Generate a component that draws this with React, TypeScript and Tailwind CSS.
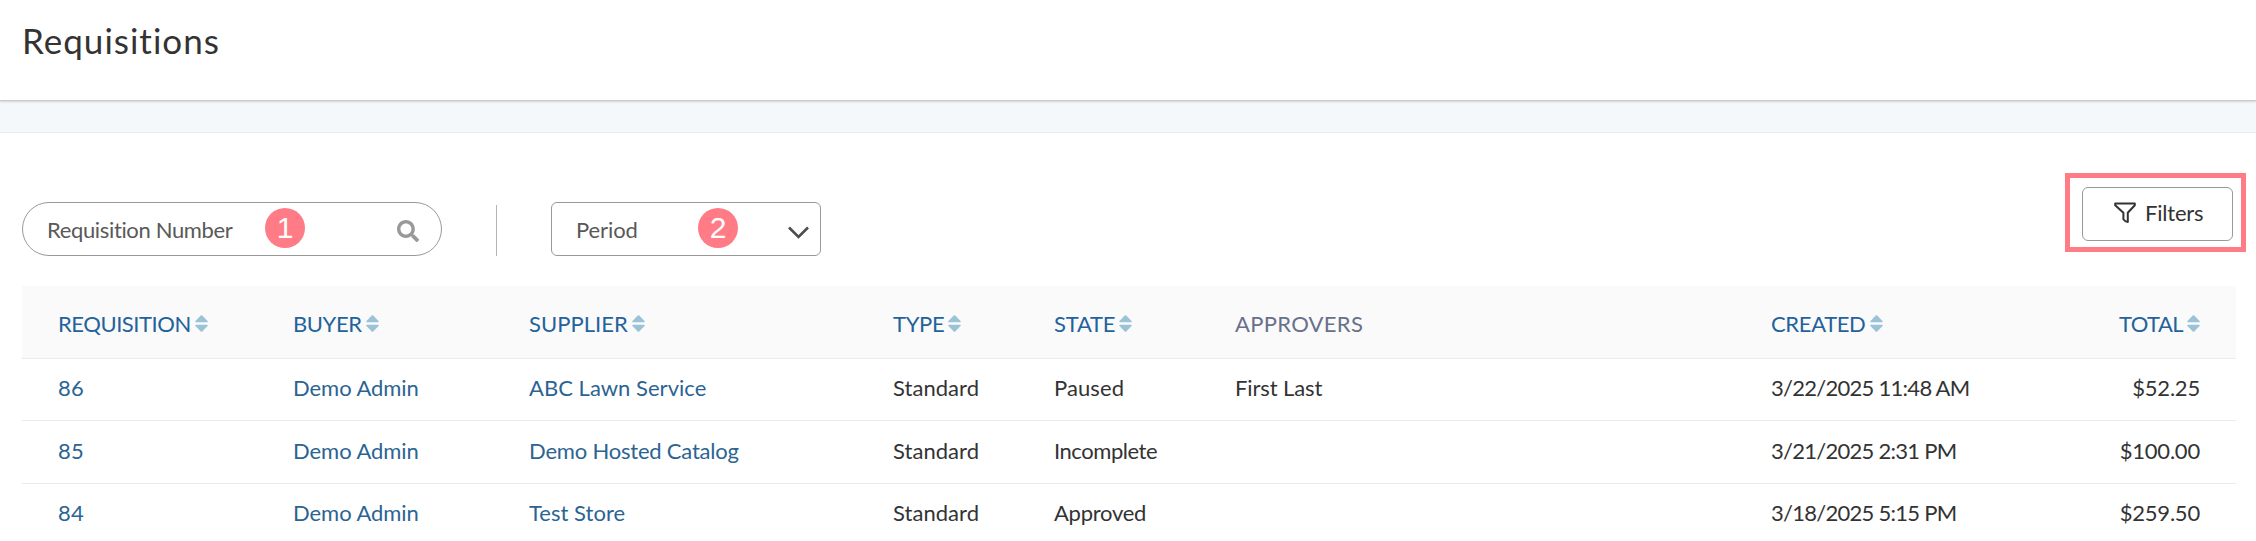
import clsx from 'clsx';
import { FaSearch } from 'react-icons/fa';

const COLUMNS = [
  { label: 'REQUISITION', width: 'w-[235px]', spacing: 'tracking-[-0.45px]', sortable: true },
  { label: 'BUYER', width: 'w-[236px]', spacing: 'tracking-[-0.4px]', sortable: true },
  { label: 'SUPPLIER', width: 'w-[364px]', spacing: 'tracking-[0.05px]', sortable: true },
  { label: 'TYPE', width: 'w-[161px]', spacing: 'tracking-[-0.3px]', sortable: true },
  { label: 'STATE', width: 'w-[181px]', spacing: 'tracking-[-0.25px]', sortable: true },
  { label: 'APPROVERS', width: 'w-[536px]', spacing: 'tracking-[0.3px]', sortable: false },
  { label: 'CREATED', width: 'w-[240px]', spacing: 'tracking-[-0.35px]', sortable: true },
  { label: 'TOTAL', width: 'w-[261px]', spacing: 'tracking-[-0.55px]', sortable: true, right: true }
];

const ROWS = [
  {
    id: '86',
    buyer: 'Demo Admin',
    supplier: { name: 'ABC Lawn Service', spacing: 'tracking-[0.03px]' },
    type: 'Standard',
    state: { name: 'Paused', spacing: 'tracking-[0.1px]' },
    approvers: 'First Last',
    created: '3/22/2025 11:48 AM',
    total: '$52.25'
  },
  {
    id: '85',
    buyer: 'Demo Admin',
    supplier: { name: 'Demo Hosted Catalog', spacing: 'tracking-[-0.2px]' },
    type: 'Standard',
    state: { name: 'Incomplete', spacing: 'tracking-[-0.45px]' },
    approvers: '',
    created: '3/21/2025 2:31 PM',
    total: '$100.00'
  },
  {
    id: '84',
    buyer: 'Demo Admin',
    supplier: { name: 'Test Store', spacing: 'tracking-[0.03px]' },
    type: 'Standard',
    state: { name: 'Approved', spacing: 'tracking-[-0.27px]' },
    approvers: '',
    created: '3/18/2025 5:15 PM',
    total: '$259.50'
  }
];

function SortIcon() {
  return (
    <svg width="13" height="17" viewBox="0 0 13 17" fill="#9bc3d8" className="ml-1 shrink-0">
      <path d="M5.7 .5a1.2 1.2 0 0 1 1.6 0l5.2 5.4c.7.7.3 1.4-.6 1.4H1.1c-.9 0-1.3-.7-.6-1.4z" />
      <path d="M5.7 16.5a1.2 1.2 0 0 0 1.6 0l5.2-5.4c.7-.7.3-1.4-.6-1.4H1.1c-.9 0-1.3.7-.6 1.4z" />
    </svg>
  );
}

function FunnelIcon() {
  return (
    <svg width="22" height="22" viewBox="0 0 22 22" fill="none" stroke="#333" strokeWidth="2" strokeLinejoin="round">
      <path d="M1.2 1.6h19.6v1.6l-7 7.6v9.2q-2.6-.2-4.4-2.8v-6.4l-8.2-7.6z" />
    </svg>
  );
}

function Badge({ value, className }: { value: number; className: string }) {
  return (
    <span
      className={clsx(
        "absolute top-[5px] flex size-10 items-center justify-center rounded-full bg-[#ff7b86] font-['Liberation_Sans',sans-serif] text-[30px] leading-none text-white",
        className
      )}
    >
      {value}
    </span>
  );
}

export default function App() {
  return (
    <div className="h-[541px] overflow-hidden bg-white font-['Lato',sans-serif] text-[22px] text-[#333] [font-variant-ligatures:none]">
      {/* Page title */}
      <header className="relative h-[101px] border-b border-[#c9cbcf] bg-white pl-[22px] pt-[19px] shadow-[0_1px_2px_rgba(0,0,0,0.15)]">
        <h1 className="text-[35px] leading-[42px] tracking-[1px]">Requisitions</h1>
      </header>
      <div className="h-8 border-b border-[#e6ebef] bg-[#f5f8fb]" />

      <main className="pl-[22px] pr-5">
        {/* Search and filters */}
        <div className="flex h-[153px] items-start">
          <div className="relative mt-[69px] flex h-[54px] w-[420px] items-center justify-between rounded-full border border-[#999] pl-6 pr-[22px]">
            <span className="pt-px tracking-[-0.35px] text-[#595959]">Requisition Number</span>
            <FaSearch size={22} className="mt-1 text-[#999]" />
            <Badge value={1} className="left-[242px]" />
          </div>
          <div className="ml-[54px] mt-[72px] h-[51px] w-px bg-[#b3b3b3]" />
          <div className="relative ml-[54px] mt-[69px] flex h-[54px] w-[270px] items-center justify-between rounded-md border border-[#999] pl-6 pr-[11px]">
            <span className="pt-px tracking-[-0.1px] text-[#595959]">Period</span>
            <svg width="21" height="14" viewBox="0 0 21 14" fill="none" stroke="#4d4d4d" strokeWidth="2.6" className="mt-2">
              <path d="M1 1.5l9.5 9.5 9.5-9.5" />
            </svg>
            <Badge value={2} className="left-[146px]" />
          </div>
          <div className="-mr-2.5 ml-auto mt-10 h-[79px] w-[181px] border-[5px] border-[#ff7b86] py-[9px] pl-3 pr-[13px]">
            <button className="flex h-[54px] w-[151px] items-center gap-[9px] rounded-md border border-[#999] bg-white pb-[3px] pl-[31px]">
              <FunnelIcon />
              <span className="tracking-[-0.2px]">Filters</span>
            </button>
          </div>
        </div>

        <table className="w-[2214px] table-fixed border-collapse">
          <thead>
            <tr className="h-[72px] border-b border-[#ebebeb] bg-[#fafafa]">
              {COLUMNS.map(col => (
                <th key={col.label} className={clsx('p-0 font-normal', col.width, col.right ? 'pr-9' : 'pl-9')}>
                  <div
                    className={clsx(
                      'flex items-center pt-[3px]',
                      col.spacing,
                      col.right && 'justify-end',
                      col.sortable ? 'text-[#23629a]' : 'text-[#68708a]'
                    )}
                  >
                    {col.label}
                    {col.sortable && <SortIcon />}
                  </div>
                </th>
              ))}
            </tr>
          </thead>
          <tbody>
            {ROWS.map(row => (
              <tr key={row.id} className="h-[62.5px] border-b border-[#ebebeb] *:pb-[3px] *:pl-9">
                <td className="tracking-[0.2px] text-[#2b6492]">{row.id}</td>
                <td className="tracking-[-0.05px] text-[#2b6492]">{row.buyer}</td>
                <td className={clsx('text-[#2b6492]', row.supplier.spacing)}>{row.supplier.name}</td>
                <td className="tracking-[0.05px]">{row.type}</td>
                <td className={row.state.spacing}>{row.state.name}</td>
                <td className="tracking-[-0.1px]">{row.approvers}</td>
                <td className="whitespace-nowrap tracking-[-0.73px]">{row.created}</td>
                <td className="pr-9 text-right tracking-[-0.2px]">{row.total}</td>
              </tr>
            ))}
          </tbody>
        </table>
      </main>
    </div>
  );
}
